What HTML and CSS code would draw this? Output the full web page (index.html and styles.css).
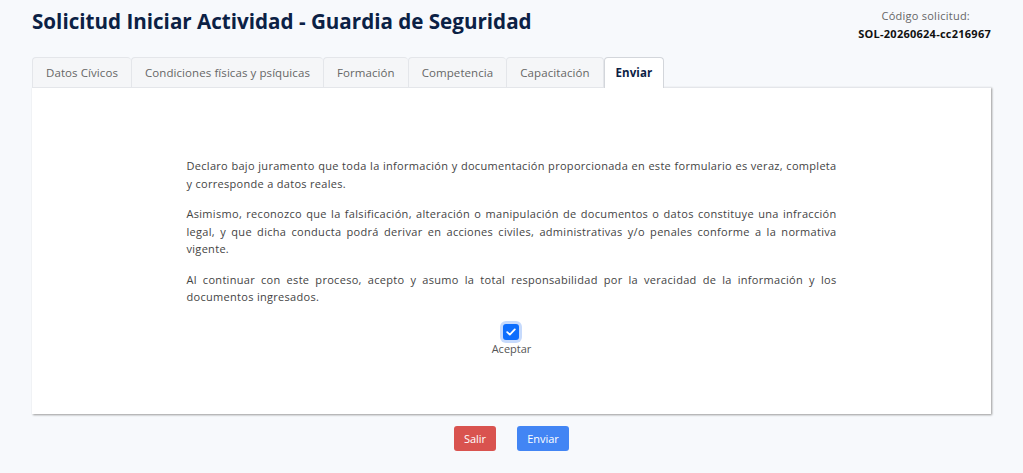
FILE: index.html
```html
<!DOCTYPE html>
<html lang="es">
<head>
	<meta charset="UTF-8">
	<title>Solicitud Iniciar Actividad</title>
	<link rel="stylesheet" href="styles.css">
</head>
<body>
	<div class="page">
		<div class="header">
			<h1>Solicitud Iniciar Actividad - Guardia de Seguridad</h1>
			<div class="code">
				<span class="code-label">Código solicitud:</span>
				<span class="code-value">SOL-20260624-cc216967</span>
			</div>
		</div>

		<ul class="tabs">
			<li>Datos Cívicos</li>
			<li>Condiciones físicas y psíquicas</li>
			<li>Formación</li>
			<li>Competencia</li>
			<li>Capacitación</li>
			<li class="active">Enviar</li>
		</ul>

		<div class="panel">
			<div class="declaration">
				<p>Declaro bajo juramento que toda la información y documentación proporcionada en este formulario es veraz, completa y corresponde a datos reales.</p>
				<p>Asimismo, reconozco que la falsificación, alteración o manipulación de documentos o datos constituye una infracción legal, y que dicha conducta podrá derivar en acciones civiles, administrativas y/o penales conforme a la normativa vigente.</p>
				<p>Al continuar con este proceso, acepto y asumo la total responsabilidad por la veracidad de la información y los documentos ingresados.</p>
			</div>
			<label class="accept">
				<span class="check">
					<svg width="10" height="8" viewBox="0 0 10 8"><path d="M1.2 4.2 L3.8 6.6 L8.8 1.4" fill="none" stroke="#fff" stroke-width="1.8" stroke-linecap="round" stroke-linejoin="round"/></svg>
				</span>
				<span>Aceptar</span>
			</label>
		</div>

		<div class="actions">
			<button class="btn btn-red">Salir</button>
			<button class="btn btn-blue">Enviar</button>
		</div>
	</div>
</body>
</html>
```

FILE: styles.css
```css
body,
h1,
ul,
p {
	margin: 0;
	padding: 0;
}

body {
	background: #f7f9fc;
	font-family: "Open Sans", "Liberation Sans", sans-serif;
	color: #444;
}

li {
	list-style: none;
}

.page {
	padding: 0 32px 0 32px;
}

.header {
	display: flex;
	justify-content: space-between;
	align-items: flex-start;
	padding-top: 7px;
	height: 50px;
}

.header h1 {
	font-size: 20.6px;
	font-weight: 700;
	color: #0b2145;
	line-height: 28px;
}

.code {
	display: flex;
	flex-direction: column;
	align-items: flex-end;
	font-size: 11px;
	line-height: 18px;
	letter-spacing: 0.25px;
}

.code-label {
	color: #666;
	margin-right: 21px;
}

.code-value {
	font-weight: 700;
	color: #111;
}

.tabs {
	display: flex;
	height: 30px;
}

.tabs li {
	font-size: 11.5px;
	letter-spacing: 0.08px;
	color: #666;
	line-height: 29px;
	padding: 0 13px;
	background: #f5f6f8;
	border: 1px solid #e4e6ea;
	border-bottom: none;
	border-right: none;
	border-radius: 4px 4px 0 0;
}

.tabs li:nth-child(5) {
	border-right: 1px solid #e4e6ea;
}

.tabs li.active {
	background: #fff;
	color: #0b2145;
	font-weight: 700;
	border: 1px solid #d3d6db;
	border-bottom: none;
	height: 30px;
	position: relative;
	z-index: 1;
	padding: 0 11px;
}

.panel {
	background: #fff;
	border-top: 1px solid #e4e6ea;
	height: 327px;
	box-shadow: 1px 1px 2px #9a9a9a;
	display: flex;
	flex-direction: column;
	align-items: center;
	padding-top: 69px;
	box-sizing: border-box;
}

.declaration {
	width: 650px;
	font-size: 11px;
	letter-spacing: 0.3px;
	line-height: 17.5px;
	text-align: justify;
}

.declaration p {
	margin-bottom: 13px;
}

.accept {
	display: flex;
	flex-direction: column;
	align-items: center;
	font-size: 11px;
	color: #555;
	margin-top: 5px;
}

.check {
	width: 16px;
	height: 16px;
	background: #0d6efd;
	border-radius: 3px;
	box-shadow: 0 0 0 3px #c6dafc;
	display: flex;
	align-items: center;
	justify-content: center;
	margin-bottom: 1px;
}

.actions {
	display: flex;
	justify-content: center;
	gap: 21px;
	margin-top: 12px;
}

.btn {
	font-family: "Open Sans", "Liberation Sans", sans-serif;
	font-size: 11px;
	color: #fff;
	border: none;
	border-radius: 3px;
	height: 25px;
	padding: 0;
}

.btn-red {
	background: #d9534f;
	width: 42px;
}

.btn-blue {
	background: #4285f4;
	width: 52px;
}
```
